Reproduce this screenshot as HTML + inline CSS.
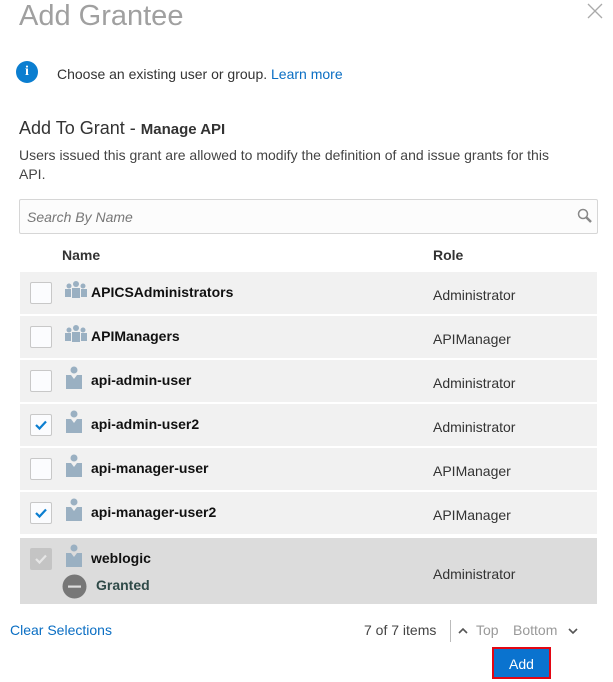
<!DOCTYPE html>
<html><head><style>
body{margin:0;width:613px;height:682px;background:#fff;font-family:"Liberation Sans",sans-serif;position:relative;overflow:hidden;color:#333}
.a{position:absolute}
.row{position:absolute;left:20px;width:577px;height:42px;background:#f1f1f1}
.cb{position:absolute;left:10px;top:10px;width:20px;height:20px;border:1px solid #c8c8c8;border-radius:2px;background:#fbfcfe}
.nm{position:absolute;left:71px;top:12px;font-weight:bold;font-size:14px;color:#111}
.rl{position:absolute;left:413px;top:15px;font-size:14px;color:#333}
.ic{position:absolute;left:44px;top:8px}
</style></head><body>
<div class="a" style="left:19px;top:0px;font-size:29px;color:#a0a0a0;font-weight:300">Add Grantee</div>
<svg class="a" style="left:587px;top:3px" width="16" height="16"><path d="M1 1L15 15M15 1L1 15" stroke="#aaa" stroke-width="1.3"/></svg>
<div class="a" style="left:16px;top:61px;width:22px;height:22px;border-radius:50%;background:#0b7ed0;color:#fff;font-weight:bold;font-size:14px;text-align:center;line-height:22px;font-family:'Liberation Serif',serif">i</div>
<div class="a" style="left:57px;top:66px;font-size:14px;color:#333">Choose an existing user or group. <span style="color:#0a6ec3">Learn more</span></div>
<div class="a" style="left:19px;top:118px;font-size:18px;color:#333">Add To Grant - <b style="font-size:15px">Manage API</b></div>
<div class="a" style="left:19px;top:146px;width:545px;font-size:14px;line-height:19px;color:#444">Users issued this grant are allowed to modify the definition of and issue grants for this API.</div>
<div class="a" style="left:19px;top:199px;width:577px;height:33px;border:1px solid #d6d6d6;border-radius:2px;background:#fcfcfc"></div>
<div class="a" style="left:27px;top:209px;font-size:14px;font-style:italic;color:#777">Search By Name</div>
<svg class="a" style="left:577px;top:208px" width="16" height="16"><circle cx="6" cy="6" r="4.5" stroke="#888" stroke-width="1.5" fill="none"/><path d="M9.5 9.5L14 14" stroke="#888" stroke-width="2.5"/></svg>
<div class="a" style="left:62px;top:247px;font-size:14px;font-weight:bold;color:#333">Name</div>
<div class="a" style="left:433px;top:247px;font-size:14px;font-weight:bold;color:#333">Role</div>

<div class="row" style="top:272px"><div class="cb"></div><svg class="ic" width="24" height="20"><g fill="#9ab0c2"><circle cx="12" cy="4" r="3"/><circle cx="5" cy="6" r="2.5"/><circle cx="19" cy="6" r="2.5"/><rect x="8" y="8" width="8" height="10"/><rect x="1" y="9" width="6" height="8"/><rect x="17" y="9" width="6" height="8"/></g></svg><div class="nm">APICSAdministrators</div><div class="rl">Administrator</div></div>
<div class="row" style="top:316px"><div class="cb"></div><svg class="ic" width="24" height="20"><g fill="#9ab0c2"><circle cx="12" cy="4" r="3"/><circle cx="5" cy="6" r="2.5"/><circle cx="19" cy="6" r="2.5"/><rect x="8" y="8" width="8" height="10"/><rect x="1" y="9" width="6" height="8"/><rect x="17" y="9" width="6" height="8"/></g></svg><div class="nm">APIManagers</div><div class="rl">APIManager</div></div>
<div class="row" style="top:360px"><div class="cb"></div><svg class="ic" style="left:45px;top:6px" width="18" height="24"><g fill="#9ab0c2"><circle cx="9" cy="4" r="3.5"/><path d="M1 9h5l3 4 3-4h5v14H1z"/></g></svg><div class="nm">api-admin-user</div><div class="rl">Administrator</div></div>
<div class="row" style="top:404px"><div class="cb"><svg width="20" height="20"><path d="M5 10l3.5 3.5L15 6.5" stroke="#0b7ed0" stroke-width="2.2" fill="none"/></svg></div><svg class="ic" style="left:45px;top:6px" width="18" height="24"><g fill="#9ab0c2"><circle cx="9" cy="4" r="3.5"/><path d="M1 9h5l3 4 3-4h5v14H1z"/></g></svg><div class="nm">api-admin-user2</div><div class="rl">Administrator</div></div>
<div class="row" style="top:448px"><div class="cb"></div><svg class="ic" style="left:45px;top:6px" width="18" height="24"><g fill="#9ab0c2"><circle cx="9" cy="4" r="3.5"/><path d="M1 9h5l3 4 3-4h5v14H1z"/></g></svg><div class="nm">api-manager-user</div><div class="rl">APIManager</div></div>
<div class="row" style="top:492px"><div class="cb"><svg width="20" height="20"><path d="M5 10l3.5 3.5L15 6.5" stroke="#0b7ed0" stroke-width="2.2" fill="none"/></svg></div><svg class="ic" style="left:45px;top:6px" width="18" height="24"><g fill="#9ab0c2"><circle cx="9" cy="4" r="3.5"/><path d="M1 9h5l3 4 3-4h5v14H1z"/></g></svg><div class="nm">api-manager-user2</div><div class="rl">APIManager</div></div>
<div class="row" style="top:538px;height:66px;background:#dcdcdc"><div class="cb" style="left:10px;top:10px;background:#c4c4c4;border-color:#c4c4c4"><svg width="20" height="20"><path d="M5 10l3.5 3.5L15 6.5" stroke="#e6e6e6" stroke-width="2.2" fill="none"/></svg></div><svg class="ic" style="left:45px;top:6px" width="18" height="24"><g fill="#9ab0c2"><circle cx="9" cy="4" r="3.5"/><path d="M1 9h5l3 4 3-4h5v14H1z"/></g></svg><div class="nm" style="top:12px">weblogic</div>
<svg class="a" style="left:42px;top:36px" width="25" height="25"><circle cx="12.5" cy="12.5" r="12" fill="#777"/><rect x="6" y="11.5" width="13" height="2.2" fill="#ddd"/></svg>
<div class="a" style="left:76px;top:39px;font-weight:bold;font-size:14px;color:#2f4a48">Granted</div><div class="rl" style="top:28px">Administrator</div></div>

<div class="a" style="left:10px;top:622px;font-size:14px;color:#0a6ec3">Clear Selections</div>
<div class="a" style="left:364px;top:622px;font-size:14px;color:#444">7 of 7 items</div>
<div class="a" style="left:450px;top:620px;width:1px;height:22px;background:#bbb"></div>
<svg class="a" style="left:458px;top:627px" width="10" height="8"><path d="M1 6l4-4 4 4" stroke="#555" stroke-width="1.6" fill="none"/></svg>
<div class="a" style="left:476px;top:622px;font-size:14px;color:#999">Top</div>
<div class="a" style="left:513px;top:622px;font-size:14px;color:#999">Bottom</div>
<svg class="a" style="left:568px;top:627px" width="10" height="8"><path d="M1 2l4 4 4-4" stroke="#555" stroke-width="1.6" fill="none"/></svg>
<div class="a" style="left:492px;top:647px;width:55px;height:28px;border:2px solid #e30613;background:#0a73cf;color:#fff;font-size:14px;text-align:center;line-height:30px">Add</div>
</body></html>
